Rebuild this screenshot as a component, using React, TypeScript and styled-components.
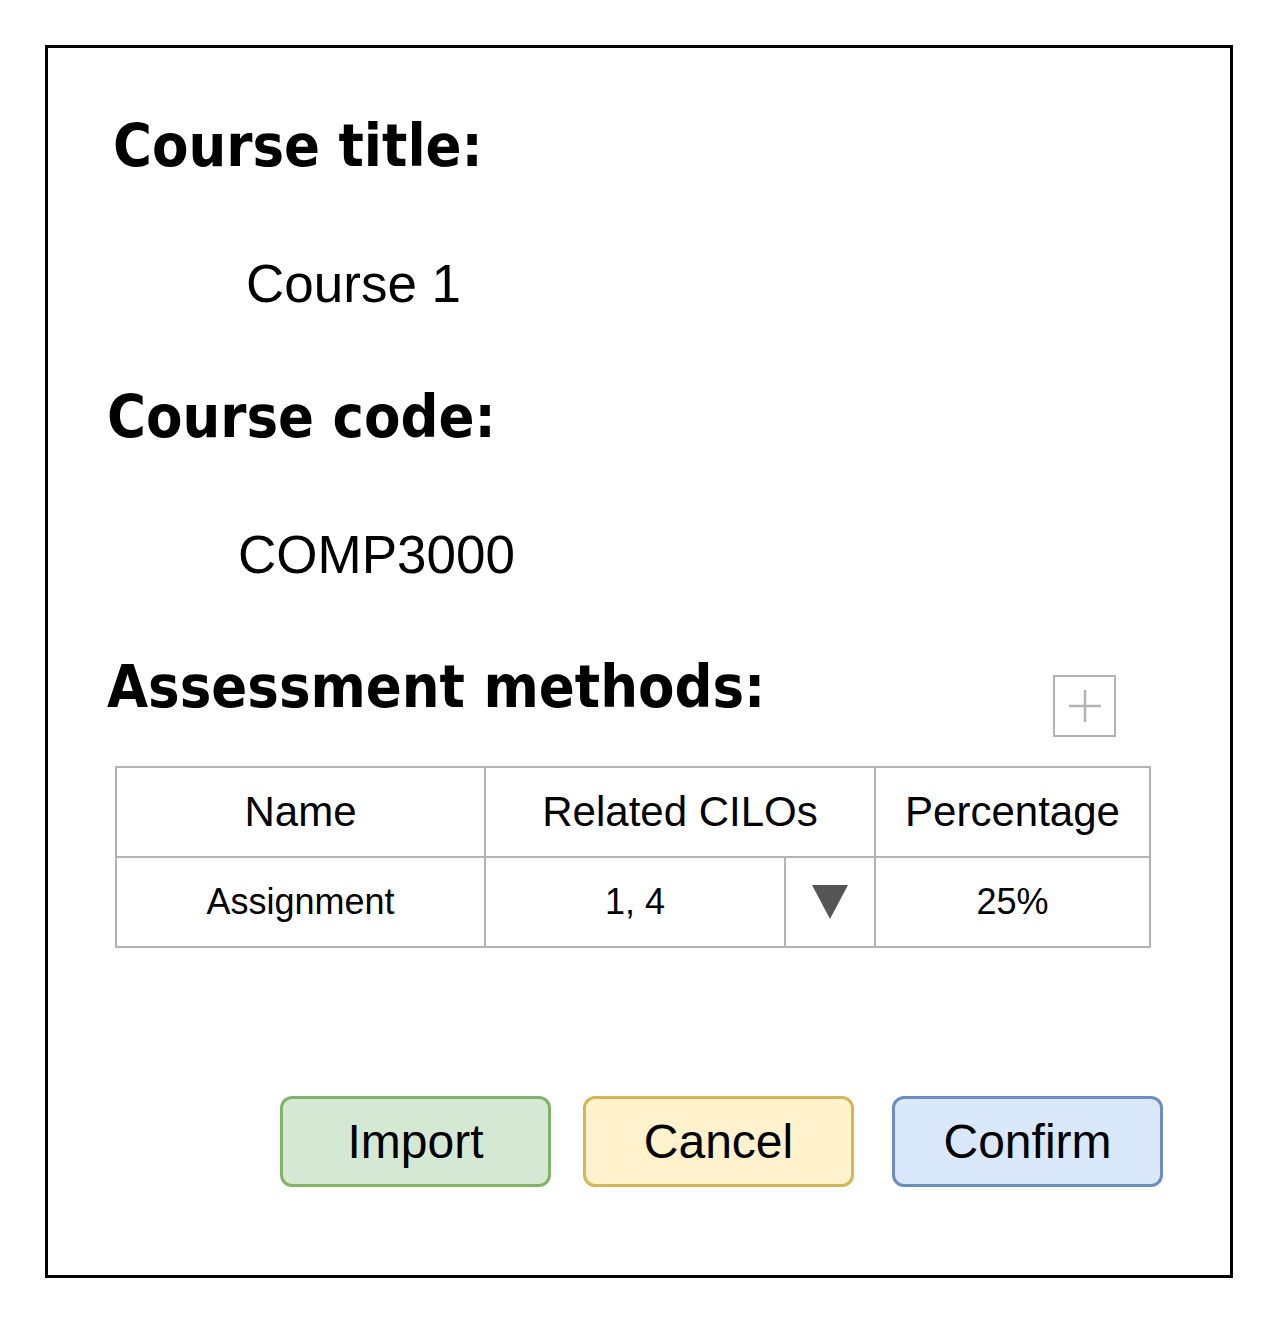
import React from "react";
import styled, { createGlobalStyle } from "styled-components";

const GlobalStyle = createGlobalStyle`
  html, body {
    margin: 0;
    padding: 0;
    background: #ffffff;
  }
  body {
    font-family: "Liberation Sans", Arial, sans-serif;
    color: #000;
  }
`;

const Frame = styled.div`
  box-sizing: border-box;
  margin: 45px 0 0 45px;
  width: 1188px;
  height: 1233px;
  border: 3px solid #000;
  display: flex;
  flex-direction: column;
`;

const Heading = styled.h2<{ $indent: number; $top: number }>`
  margin: ${(p) => p.$top}px 0 0 ${(p) => p.$indent}px;
  font-family: "DejaVu Sans Condensed", "DejaVu Sans", sans-serif;
  font-stretch: condensed;
  font-weight: 700;
  font-size: 59px;
  line-height: 59px;
  white-space: nowrap;
`;

const Value = styled.div<{ $indent: number; $top: number }>`
  margin: ${(p) => p.$top}px 0 0 ${(p) => p.$indent}px;
  font-family: "Liberation Sans", Arial, sans-serif;
  font-size: 53px;
  line-height: 53px;
  white-space: nowrap;
`;

const SectionRow = styled.div`
  margin-top: 76px;
  padding: 0 114px 0 59px;
  display: flex;
  justify-content: space-between;
  align-items: flex-start;
`;

const PlainHeading = styled(Heading)`
  margin: 0;
`;

const AddButton = styled.button`
  box-sizing: border-box;
  margin-top: 18px;
  width: 63px;
  height: 62px;
  padding: 0;
  border: 2px solid #b3b3b3;
  background: #fff;
  display: flex;
  align-items: center;
  justify-content: center;
`;

const Table = styled.div`
  margin: 29px 0 0 67px;
  width: 1036px;
  box-sizing: border-box;
  display: grid;
  grid-template-columns: 369px 300px 90px 275px;
  grid-auto-rows: 90px;
  border-left: 2px solid #b3b3b3;
  border-top: 2px solid #b3b3b3;
`;

const Cell = styled.div<{ $span?: number; $size: number }>`
  box-sizing: border-box;
  grid-column: span ${(p) => p.$span ?? 1};
  border-right: 2px solid #b3b3b3;
  border-bottom: 2px solid #b3b3b3;
  display: flex;
  align-items: center;
  justify-content: center;
  font-family: "Liberation Sans", Arial, sans-serif;
  font-size: ${(p) => p.$size}px;
  white-space: nowrap;
`;

const ButtonRow = styled.div`
  margin: 148px 0 0 232px;
  display: flex;
  gap: 32px;
`;

const palette = {
  green: { fill: "#d5e8d4", stroke: "#82b366" },
  yellow: { fill: "#fff2cc", stroke: "#d6b656" },
  blue: { fill: "#dae8fc", stroke: "#6c8ebf" },
};

const ActionButton = styled.button<{ $tone: keyof typeof palette; $extra?: number }>`
  box-sizing: border-box;
  margin-left: ${(p) => p.$extra ?? 0}px;
  width: 271px;
  height: 91px;
  border-radius: 12px;
  border: 3px solid ${(p) => palette[p.$tone].stroke};
  background: ${(p) => palette[p.$tone].fill};
  font-family: "Liberation Sans", Arial, sans-serif;
  font-size: 48px;
  color: #000;
  padding: 0;
  display: flex;
  align-items: center;
  justify-content: center;
`;

const PlusIcon = () => (
  <svg width="32" height="32" viewBox="0 0 32 32">
    <path d="M16 0V32M0 16H32" stroke="#b3b3b3" strokeWidth="2.5" fill="none" />
  </svg>
);

const Caret = () => (
  <svg width="36" height="36" viewBox="0 0 36 36">
    <polygon points="0,1 36,1 18,35" fill="#555555" />
  </svg>
);

export default function App() {
  return (
    <>
      <GlobalStyle />
      <Frame>
        <Heading $indent={65} $top={68}>Course title:</Heading>
        <Value $indent={198} $top={82}>Course 1</Value>
        <Heading $indent={59} $top={77}>Course code:</Heading>
        <Value $indent={190} $top={82}>COMP3000</Value>
        <SectionRow>
          <PlainHeading $indent={0} $top={0}>Assessment methods:</PlainHeading>
          <AddButton aria-label="Add">
            <PlusIcon />
          </AddButton>
        </SectionRow>
        <Table>
          <Cell $size={42}>Name</Cell>
          <Cell $size={42} $span={2}>Related CILOs</Cell>
          <Cell $size={42}>Percentage</Cell>
          <Cell $size={36}>Assignment</Cell>
          <Cell $size={36}>1, 4</Cell>
          <Cell $size={36}>
            <Caret />
          </Cell>
          <Cell $size={36}>25%</Cell>
        </Table>
        <ButtonRow>
          <ActionButton $tone="green">Import</ActionButton>
          <ActionButton $tone="yellow">Cancel</ActionButton>
          <ActionButton $tone="blue" $extra={6}>Confirm</ActionButton>
        </ButtonRow>
      </Frame>
    </>
  );
}
